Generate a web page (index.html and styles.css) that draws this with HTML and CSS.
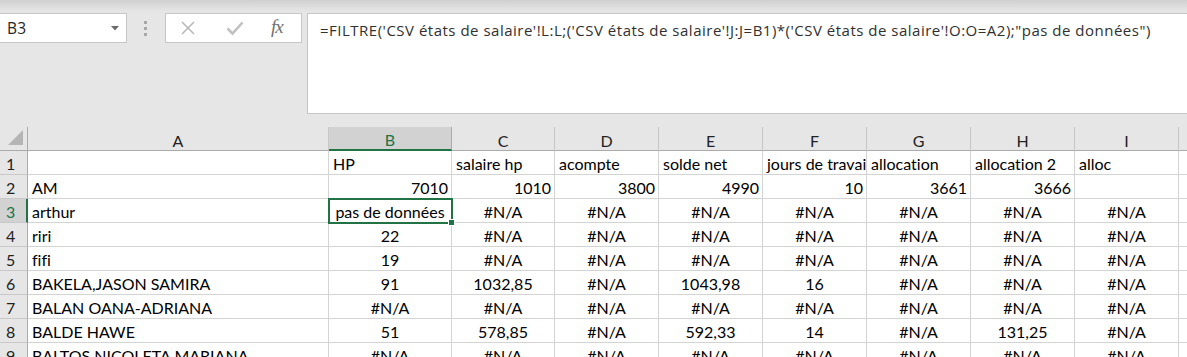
FILE: index.html
```html
<!DOCTYPE html>
<html lang="fr">
<head>
<meta charset="utf-8">
<title>Excel</title>
<link rel="stylesheet" href="styles.css">
</head>
<body>
<div class="app">
  <div class="topstrip"></div>
  <div class="fbar">
    <div class="namebox">
      <span class="nb-text">B3</span>
      <svg class="nb-arrow" width="8" height="5" viewBox="0 0 8 5"><path d="M0 0H8L4 4.5Z" fill="#6b6b6b"/></svg>
    </div>
    <div class="grip">
      <svg width="4" height="16" viewBox="0 0 4 16"><rect x="0" y="1" width="3" height="3" fill="#a8a8a8"/><rect x="0" y="7" width="3" height="3" fill="#a8a8a8"/><rect x="0" y="13" width="3" height="3" fill="#a8a8a8"/></svg>
    </div>
    <div class="fxbox">
      <svg class="ic-x" width="16" height="16" viewBox="0 0 16 16"><path d="M2 2L14 14M14 2L2 14" stroke="#b9b9b9" stroke-width="1.6" fill="none"/></svg>
      <svg class="ic-ok" width="18" height="16" viewBox="0 0 18 16"><path d="M1.5 8.5L6.5 13.5L16.5 2.5" stroke="#c0c0c0" stroke-width="2.6" fill="none"/></svg>
      <span class="ic-fx">fx</span>
    </div>
    <div class="formula">=FILTRE('CSV états de salaire'!L:L;('CSV états de salaire'!J:J=B1)*('CSV états de salaire'!O:O=A2);"pas de données")</div>
  </div>
  <div class="sheet">
    <div class="corner"><svg width="17" height="16" viewBox="0 0 17 16"><path d="M16 0V15H1Z" fill="#b5b5b5"/></svg></div>
    <div class="ch">A</div><div class="ch sel">B</div><div class="ch">C</div><div class="ch">D</div><div class="ch">E</div><div class="ch">F</div><div class="ch">G</div><div class="ch">H</div><div class="ch">I</div><div class="ch last"></div>

    <div class="rh">1</div><div class="c"></div><div class="c">HP</div><div class="c">salaire hp</div><div class="c">acompte</div><div class="c">solde net</div><div class="c clip">jours de travail</div><div class="c">allocation</div><div class="c">allocation 2</div><div class="c">alloc</div><div class="c"></div>

    <div class="rh">2</div><div class="c">AM</div><div class="c r">7010</div><div class="c r">1010</div><div class="c r">3800</div><div class="c r">4990</div><div class="c r">10</div><div class="c r">3661</div><div class="c r">3666</div><div class="c"></div><div class="c"></div>

    <div class="rh rsel">3</div><div class="c">arthur</div><div class="c m active">pas de données<span class="handle"></span></div><div class="c m">#N/A</div><div class="c m">#N/A</div><div class="c m">#N/A</div><div class="c m">#N/A</div><div class="c m">#N/A</div><div class="c m">#N/A</div><div class="c m">#N/A</div><div class="c"></div>

    <div class="rh">4</div><div class="c">riri</div><div class="c m">22</div><div class="c m">#N/A</div><div class="c m">#N/A</div><div class="c m">#N/A</div><div class="c m">#N/A</div><div class="c m">#N/A</div><div class="c m">#N/A</div><div class="c m">#N/A</div><div class="c"></div>

    <div class="rh">5</div><div class="c">fifi</div><div class="c m">19</div><div class="c m">#N/A</div><div class="c m">#N/A</div><div class="c m">#N/A</div><div class="c m">#N/A</div><div class="c m">#N/A</div><div class="c m">#N/A</div><div class="c m">#N/A</div><div class="c"></div>

    <div class="rh">6</div><div class="c">BAKELA,JASON SAMIRA</div><div class="c m">91</div><div class="c m">1032,85</div><div class="c m">#N/A</div><div class="c m">1043,98</div><div class="c m">16</div><div class="c m">#N/A</div><div class="c m">#N/A</div><div class="c m">#N/A</div><div class="c"></div>

    <div class="rh">7</div><div class="c">BALAN OANA-ADRIANA</div><div class="c m">#N/A</div><div class="c m">#N/A</div><div class="c m">#N/A</div><div class="c m">#N/A</div><div class="c m">#N/A</div><div class="c m">#N/A</div><div class="c m">#N/A</div><div class="c m">#N/A</div><div class="c"></div>

    <div class="rh">8</div><div class="c">BALDE HAWE</div><div class="c m">51</div><div class="c m">578,85</div><div class="c m">#N/A</div><div class="c m">592,33</div><div class="c m">14</div><div class="c m">#N/A</div><div class="c m">131,25</div><div class="c m">#N/A</div><div class="c"></div>

    <div class="rh">9</div><div class="c">BALTOS NICOLETA MARIANA</div><div class="c m">#N/A</div><div class="c m">#N/A</div><div class="c m">#N/A</div><div class="c m">#N/A</div><div class="c m">#N/A</div><div class="c m">#N/A</div><div class="c m">#N/A</div><div class="c m">#N/A</div><div class="c"></div>
  </div>
</div>
</body>
</html>
```

FILE: styles.css
```css
html, body {
  margin: 0;
  padding: 0;
  background: #e6e6e6;
  overflow: hidden;
}
.app {
  width: 1187px;
  height: 357px;
  overflow: hidden;
  background: #e6e6e6;
}
.topstrip {
  height: 13px;
  background: linear-gradient(#cfcfcf, #e2e2e2 70%, #e6e6e6);
}
.fbar {
  display: flex;
  align-items: flex-start;
  height: 101px;
  margin-bottom: 13px;
}
.namebox {
  box-sizing: border-box;
  width: 127px;
  height: 30px;
  background: #fff;
  border: 1px solid #c6c6c6;
  border-left: none;
  display: flex;
  align-items: center;
  justify-content: space-between;
  padding: 0 7px 0 7px;
}
.nb-text {
  font-family: "Open Sans", "Noto Sans", sans-serif;
  font-size: 15.5px;
  color: #262626;
  letter-spacing: 0.3px;
}
.nb-arrow { margin-top: 1px; }
.grip {
  width: 37px;
  height: 30px;
  display: flex;
  align-items: center;
  justify-content: center;
  padding-right: 1px;
}
.fxbox {
  box-sizing: border-box;
  width: 137px;
  height: 30px;
  background: #fff;
  border: 1px solid #c6c6c6;
  display: flex;
  align-items: center;
  padding-left: 14px;
}
.ic-x { margin-right: 30px; }
.ic-ok { margin-right: 27px; }
.ic-fx {
  font-family: "Liberation Serif", "DejaVu Serif", serif;
  font-style: italic;
  font-size: 19px;
  color: #6f6f6f;
  letter-spacing: -1px;
  line-height: 1;
  margin-top: -3px;
}
.formula {
  box-sizing: border-box;
  flex: 1;
  height: 101px;
  margin-left: 5px;
  background: #fff;
  border: 1px solid #c6c6c6;
  border-right: none;
  padding: 6px 0 0 12px;
  font-family: "Open Sans", "Noto Sans", sans-serif;
  font-size: 15px;
  letter-spacing: 0.5px;
  color: #303030;
  white-space: nowrap;
  overflow: hidden;
}
.sheet {
  display: grid;
  grid-template-columns: 28px 301px 123px 103px repeat(6, 104px) 1fr;
  grid-template-rows: 24px repeat(9, 24px);
  background: #fff;
  font-family: "Lato", "Liberation Sans", sans-serif;
  font-size: 16px;
  font-variant-ligatures: none;
  color: #000;
}
.corner {
  background: #e6e6e6;
  border-right: 1px solid #ababab;
  border-bottom: 1px solid #ababab;
  display: flex;
  align-items: flex-end;
  justify-content: flex-end;
  padding: 0 3px 4px 0;
  box-sizing: border-box;
}
.ch {
  background: #e6e6e6;
  border-bottom: 1px solid #ababab;
  border-right: 1px solid #c8c8c8;
  display: flex;
  align-items: center;
  justify-content: center;
  font-size: 16px;
  color: #222;
  box-sizing: border-box;
  padding-top: 3px;
}
.ch.sel {
  background: #d2d2d2;
  color: #217346;
  border-bottom: 2px solid #217346;
  border-right-color: #ababab;
}
.ch.last { border-right: none; }
.rh {
  background: #e6e6e6;
  border-right: 1px solid #ababab;
  border-bottom: 1px solid #c8c8c8;
  box-sizing: border-box;
  padding: 3px 0 0 6px;
  font-size: 16px;
  line-height: 19px;
  color: #222;
}
.rh.rsel {
  background: #d2d2d2;
  color: #217346;
  border-right: 2px solid #217346;
}
.c {
  position: relative;
  box-sizing: border-box;
  border-right: 1px solid #d4d4d4;
  border-bottom: 1px solid #d4d4d4;
  padding: 3px 4px 0 4px;
  white-space: nowrap;
  overflow: hidden;
  line-height: 19px;
}
.c.clip { overflow: hidden; text-overflow: clip; }
.c.r { text-align: right; padding-right: 3px; }
.c.m { text-align: center; padding-left: 0; padding-right: 0; }
.c.active {
  overflow: visible;
  outline: 2px solid #217346;
  outline-offset: -1px;
  z-index: 2;
}
.handle {
  position: absolute;
  right: -4px;
  bottom: -4px;
  width: 5px;
  height: 5px;
  background: #217346;
  border: 1px solid #fff;
}
```
